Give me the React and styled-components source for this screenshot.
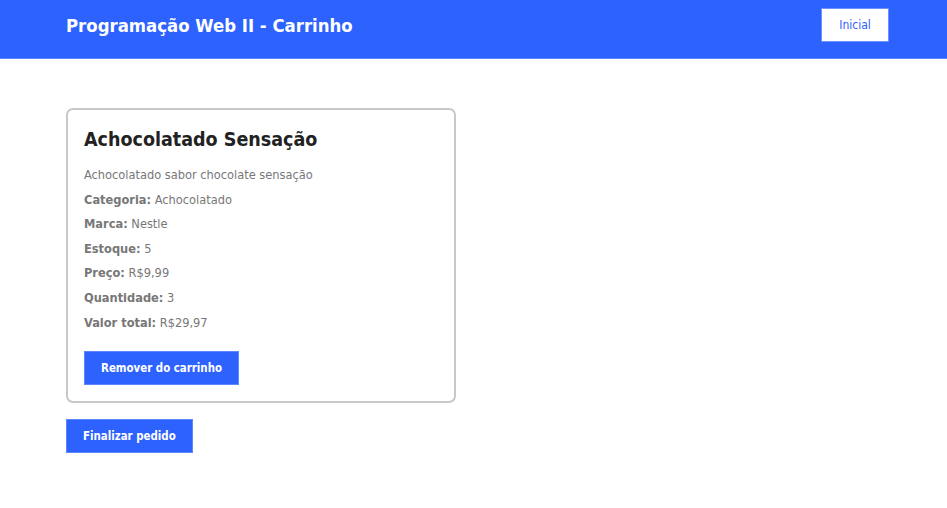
import React from 'react';
import styled, { createGlobalStyle } from 'styled-components';

const GlobalStyle = createGlobalStyle`
  body {
    margin: 0;
    background: #ffffff;
    font-family: "DejaVu Sans Condensed", "DejaVu Sans", sans-serif;
  }
`;

const Header = styled.header`
  height: 59px;
  background: #2d62ff;
  border-bottom: 1px solid #5a86ff;
  display: flex;
  align-items: center;
  justify-content: space-between;
  padding: 0 58px 0 66px;
  box-sizing: border-box;
`;

const Brand = styled.h1`
  margin: 0 0 8px;
  color: #ffffff;
  font-size: 18.4px;
  font-weight: bold;
`;

const NavButton = styled.button`
  height: 34px;
  width: 68px;
  margin-bottom: 8px;
  background: #ffffff;
  border: 1px solid #6b92ff;
  color: #2d62ff;
  font-family: inherit;
  font-size: 12px;
  cursor: pointer;
`;

const Main = styled.main`
  padding: 49px 66px;
  display: flex;
  flex-direction: column;
  align-items: flex-start;
  gap: 16px;
`;

const Card = styled.div`
  width: 390px;
  box-sizing: border-box;
  border: 2px solid #c8c8c8;
  border-radius: 7px;
  padding: 18px 16px 16px 16px;
`;

const Title = styled.h2`
  margin: 0 0 12px;
  color: #222222;
  font-size: 19.5px;
  font-weight: bold;
`;

const Line = styled.p`
  margin: 0;
  height: 24.6px;
  line-height: 24.6px;
  font-size: 12.7px;
  color: #777777;

  strong {
    font-weight: bold;
  }
`;

const ActionButton = styled.button`
  height: 34px;
  padding: 0 16px;
  background: #2d62ff;
  border: 1px solid #5a86ff;
  color: #ffffff;
  font-family: inherit;
  font-size: 11.4px;
  font-weight: bold;
  cursor: pointer;
  margin-top: ${(p) => p.$top || 0}px;
`;

const product = {
  nome: 'Achocolatado Sensação',
  descricao: 'Achocolatado sabor chocolate sensação',
  categoria: 'Achocolatado',
  marca: 'Nestle',
  estoque: 5,
  preco: 'R$9,99',
  quantidade: 3,
  total: 'R$29,97',
};

export default function App() {
  return (
    <>
      <GlobalStyle />
      <Header>
        <Brand>Programação Web II - Carrinho</Brand>
        <NavButton>Inicial</NavButton>
      </Header>
      <Main>
        <Card>
          <Title>{product.nome}</Title>
          <Line>{product.descricao}</Line>
          <Line><strong>Categoria:</strong> {product.categoria}</Line>
          <Line><strong>Marca:</strong> {product.marca}</Line>
          <Line><strong>Estoque:</strong> {product.estoque}</Line>
          <Line><strong>Preço:</strong> {product.preco}</Line>
          <Line><strong>Quantidade:</strong> {product.quantidade}</Line>
          <Line><strong>Valor total:</strong> {product.total}</Line>
          <ActionButton $top={16}>Remover do carrinho</ActionButton>
        </Card>
        <ActionButton>Finalizar pedido</ActionButton>
      </Main>
    </>
  );
}
